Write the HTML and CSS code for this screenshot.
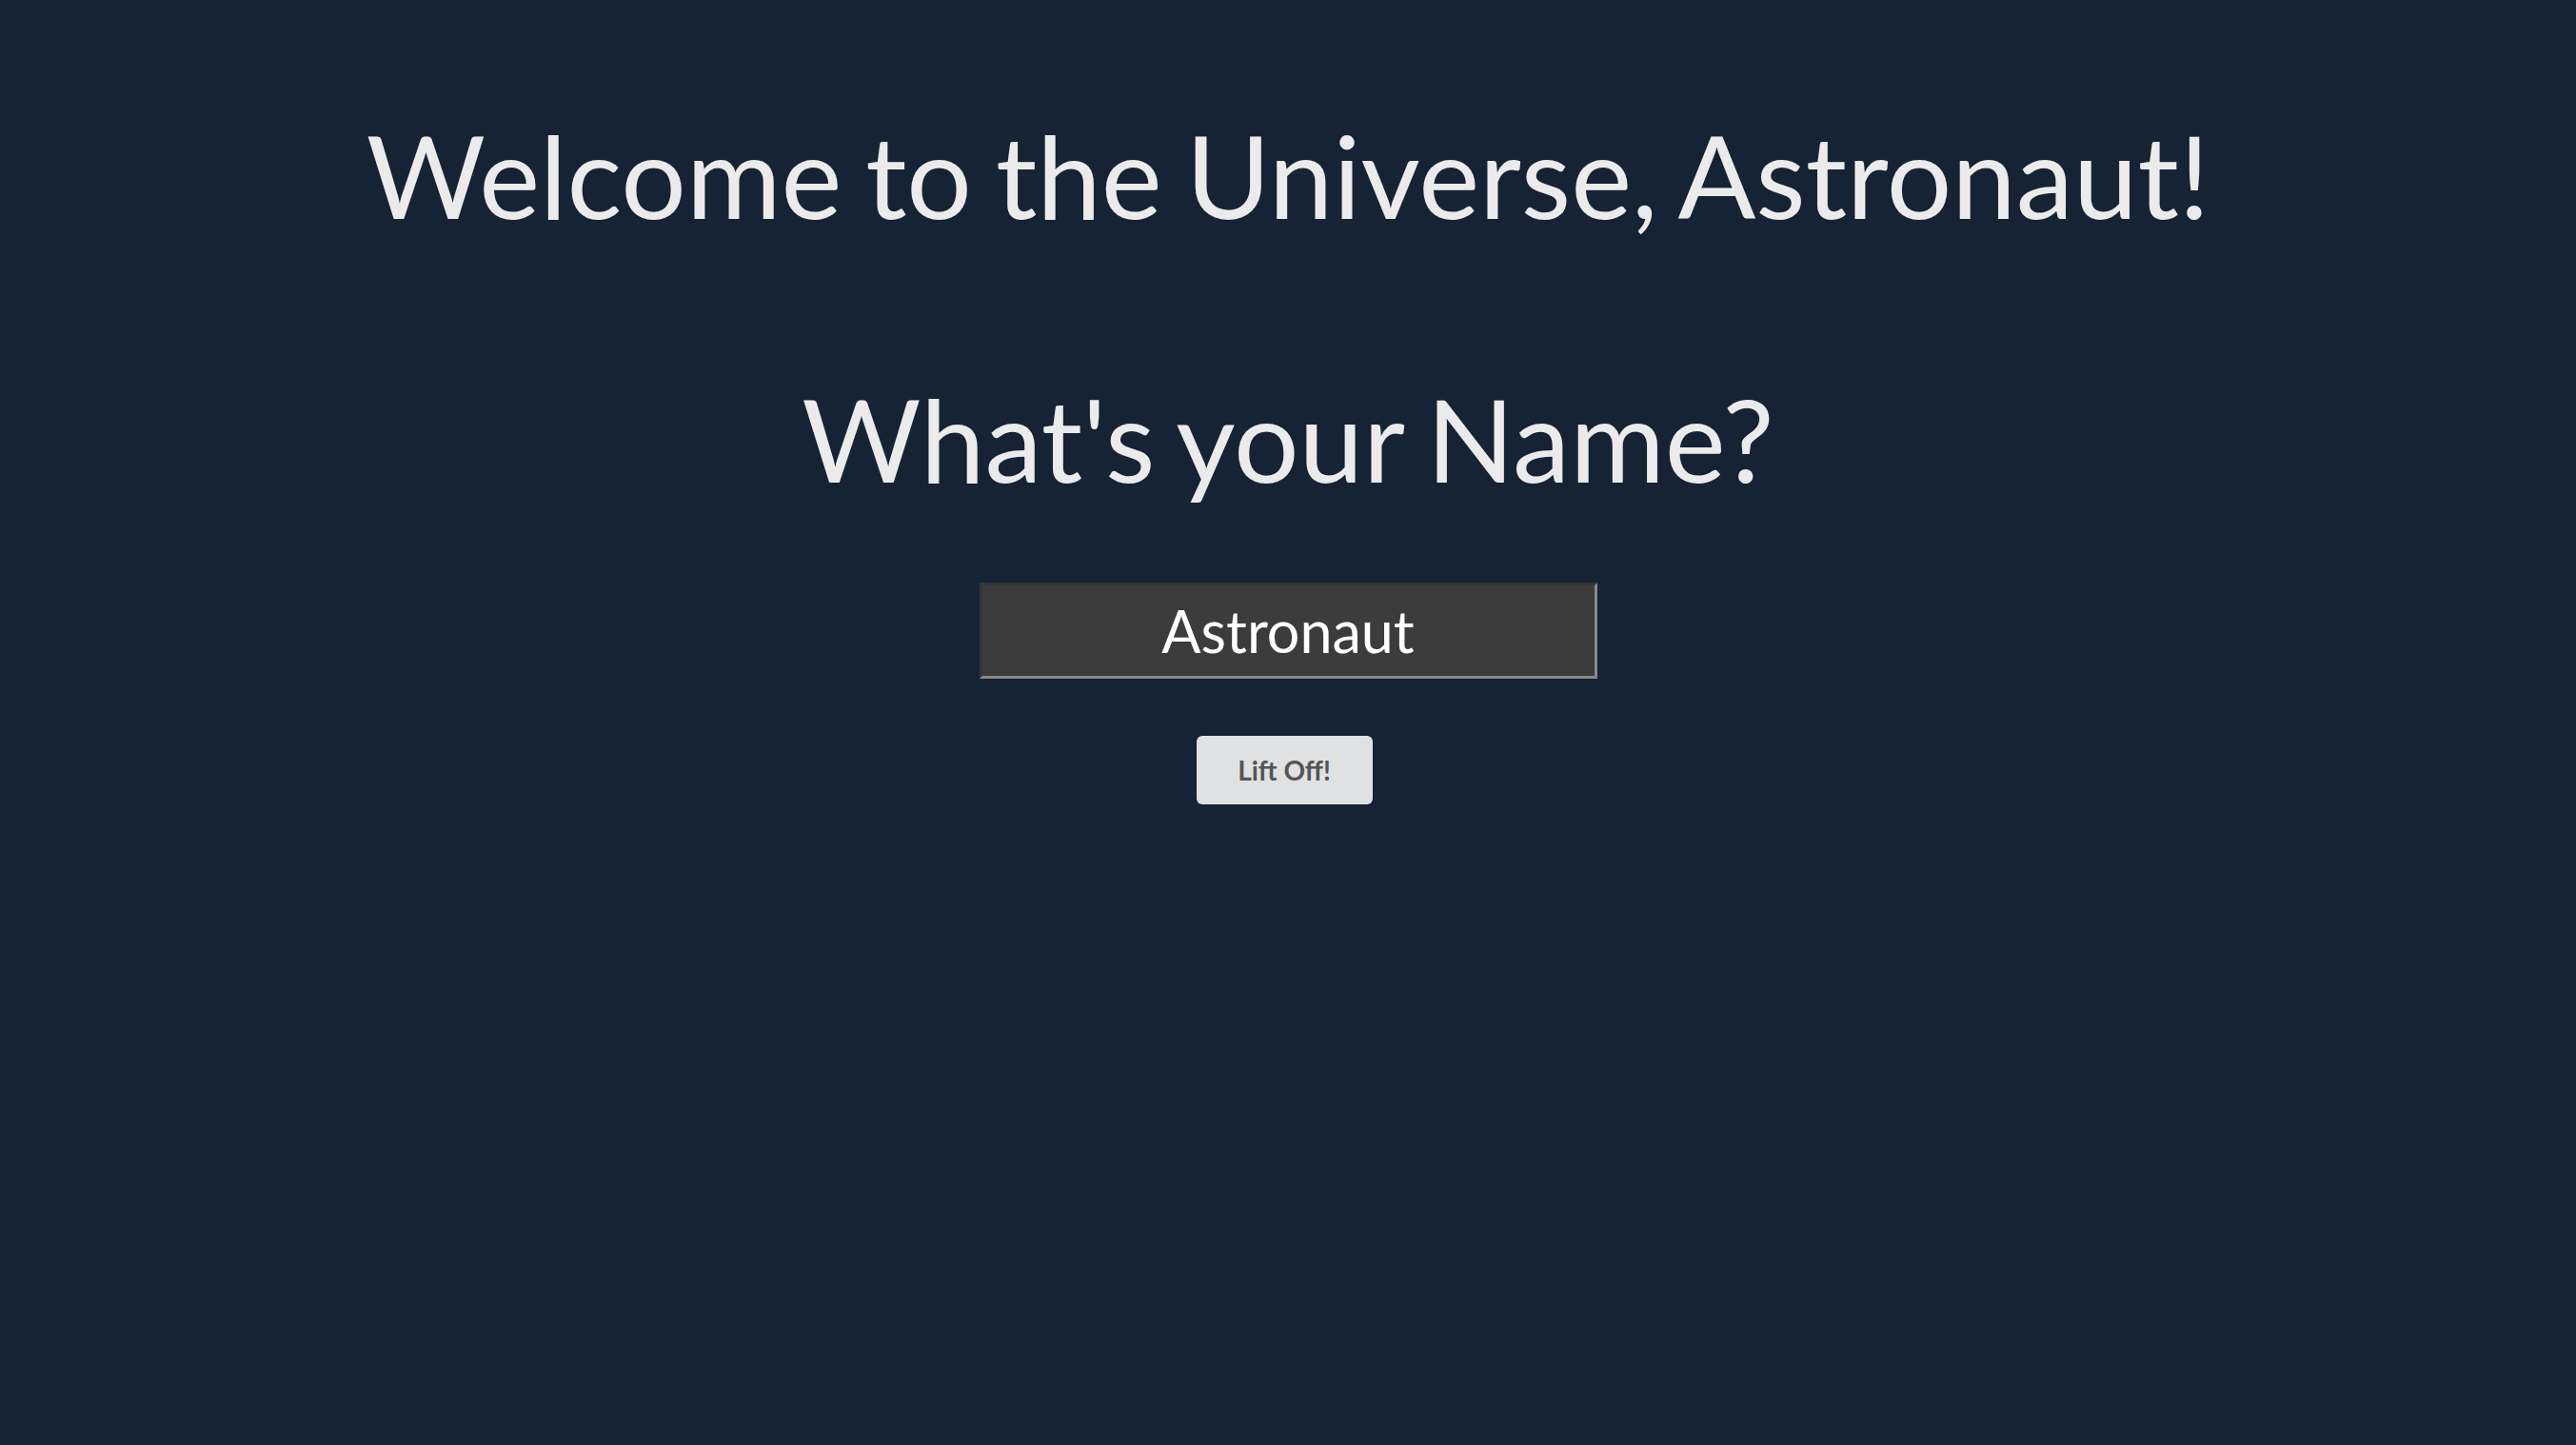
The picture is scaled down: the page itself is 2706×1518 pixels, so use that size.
FILE: index.html
```html
<!DOCTYPE html>
<html lang="en">
<head>
<meta charset="utf-8">
<title>Welcome</title>
<link rel="stylesheet" href="styles.css">
</head>
<body>
<main class="page">
  <h1 class="title">Welcome to the Universe, Astronaut!</h1>
  <h1 class="title title-second">What's your Name?</h1>
  <input class="name-input" type="text" value="Astronaut">
  <button class="lift-btn" type="button">Lift Off!</button>
</main>
</body>
</html>
```
FILE: styles.css
```css
html, body {
  margin: 0;
  padding: 0;
  background: #162335;
  height: 100%;
}
body {
  font-family: Lato, "Open Sans", sans-serif;
}
.page {
  display: flex;
  flex-direction: column;
  align-items: center;
  padding-top: 112px;
}
.title {
  margin: 0;
  font-size: 121px;
  font-weight: 400;
  line-height: 144px;
  color: #ebebeb;
  text-align: center;
  word-spacing: -6px;
}
.title-second {
  margin-top: 133px;
}
.name-input {
  box-sizing: border-box;
  margin-top: 79px;
  width: 649px;
  height: 101px;
  background: #3c3c3c;
  border-style: solid;
  border-width: 3px;
  border-color: #353535 #888888 #888888 #353535;
  color: #ffffff;
  font-family: Lato, sans-serif;
  font-size: 61px;
  text-align: center;
  padding: 0;
  outline: none;
}
.lift-btn {
  box-sizing: border-box;
  margin-top: 60px;
  margin-right: 8px;
  width: 185px;
  height: 72px;
  background: #e0e1e3;
  border: none;
  border-radius: 6px;
  color: #555555;
  font-family: Lato, sans-serif;
  font-weight: 700;
  font-size: 28px;
  padding: 0;
}
```
